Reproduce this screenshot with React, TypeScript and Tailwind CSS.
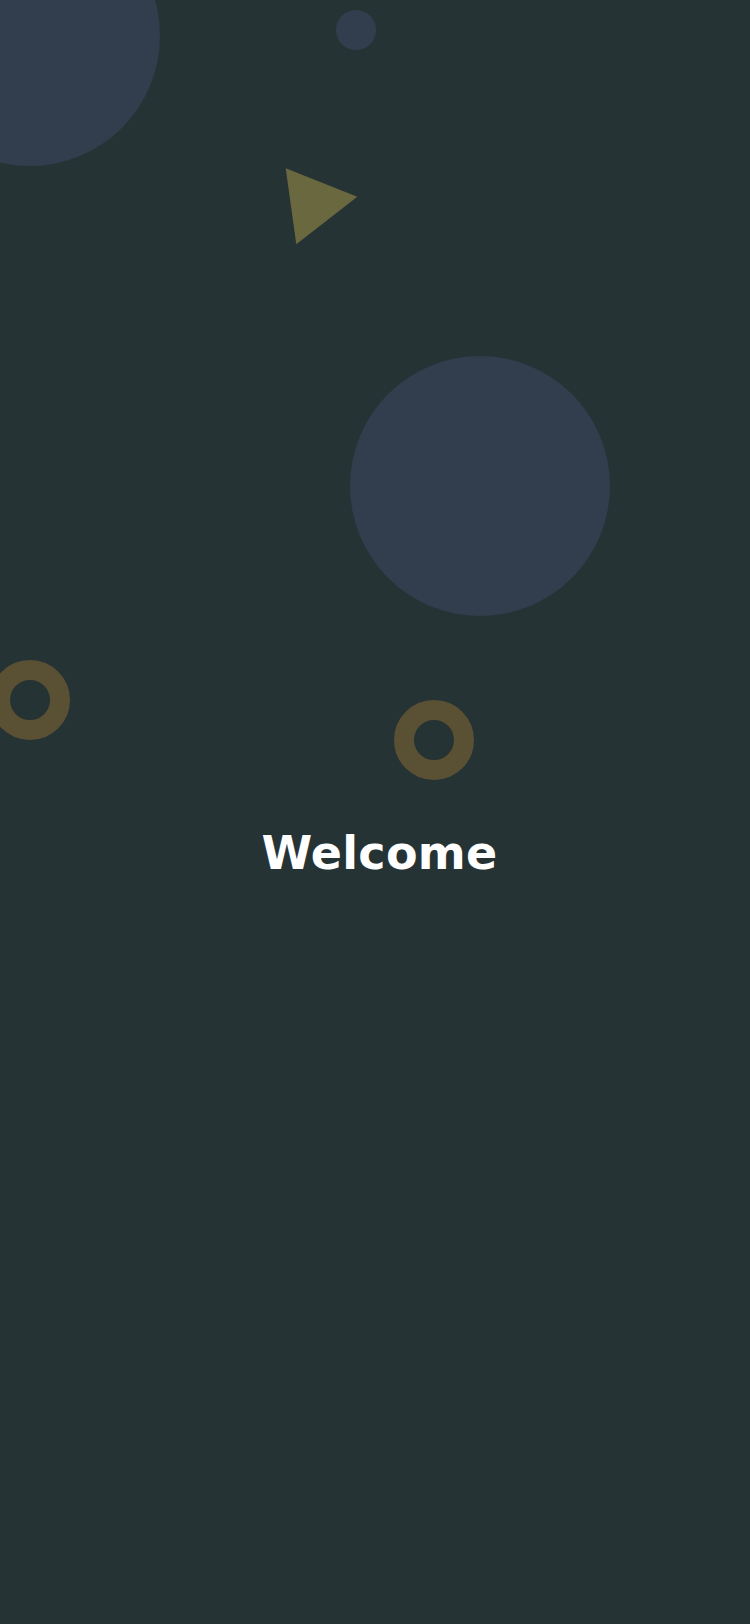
export default function App() {
  return (
    <main className="relative h-screen w-full overflow-hidden bg-[#263335]">
      {/* background shapes */}
      <div className="absolute left-[-100px] top-[-94px] h-[260px] w-[260px] rounded-full bg-[#323e4d]"></div>
      <div className="absolute left-[336px] top-[10px] h-[40px] w-[40px] rounded-full bg-[#323e4d]"></div>
      <svg className="absolute left-0 top-0" width="400" height="260" viewBox="0 0 400 260">
        <polygon points="285.7,168.3 357.3,196.7 296.3,244.3" fill="#6a683f" />
      </svg>
      <div className="absolute left-[350px] top-[356px] h-[260px] w-[260px] rounded-full bg-[#323e4d]"></div>
      <div className="absolute left-[-10px] top-[660px] h-[80px] w-[80px] rounded-full border-[20px] border-[#5a5033]"></div>
      <div className="absolute left-[394px] top-[700px] h-[80px] w-[80px] rounded-full border-[20px] border-[#5a5033]"></div>

      <div className="relative flex justify-center pl-[9px] pt-[820px]">
        <h1 className="text-[46px] font-bold leading-[66px] text-white font-['DejaVu_Sans',sans-serif] tracking-[0.3px]">
          Welcome
        </h1>
      </div>
    </main>
  );
}
